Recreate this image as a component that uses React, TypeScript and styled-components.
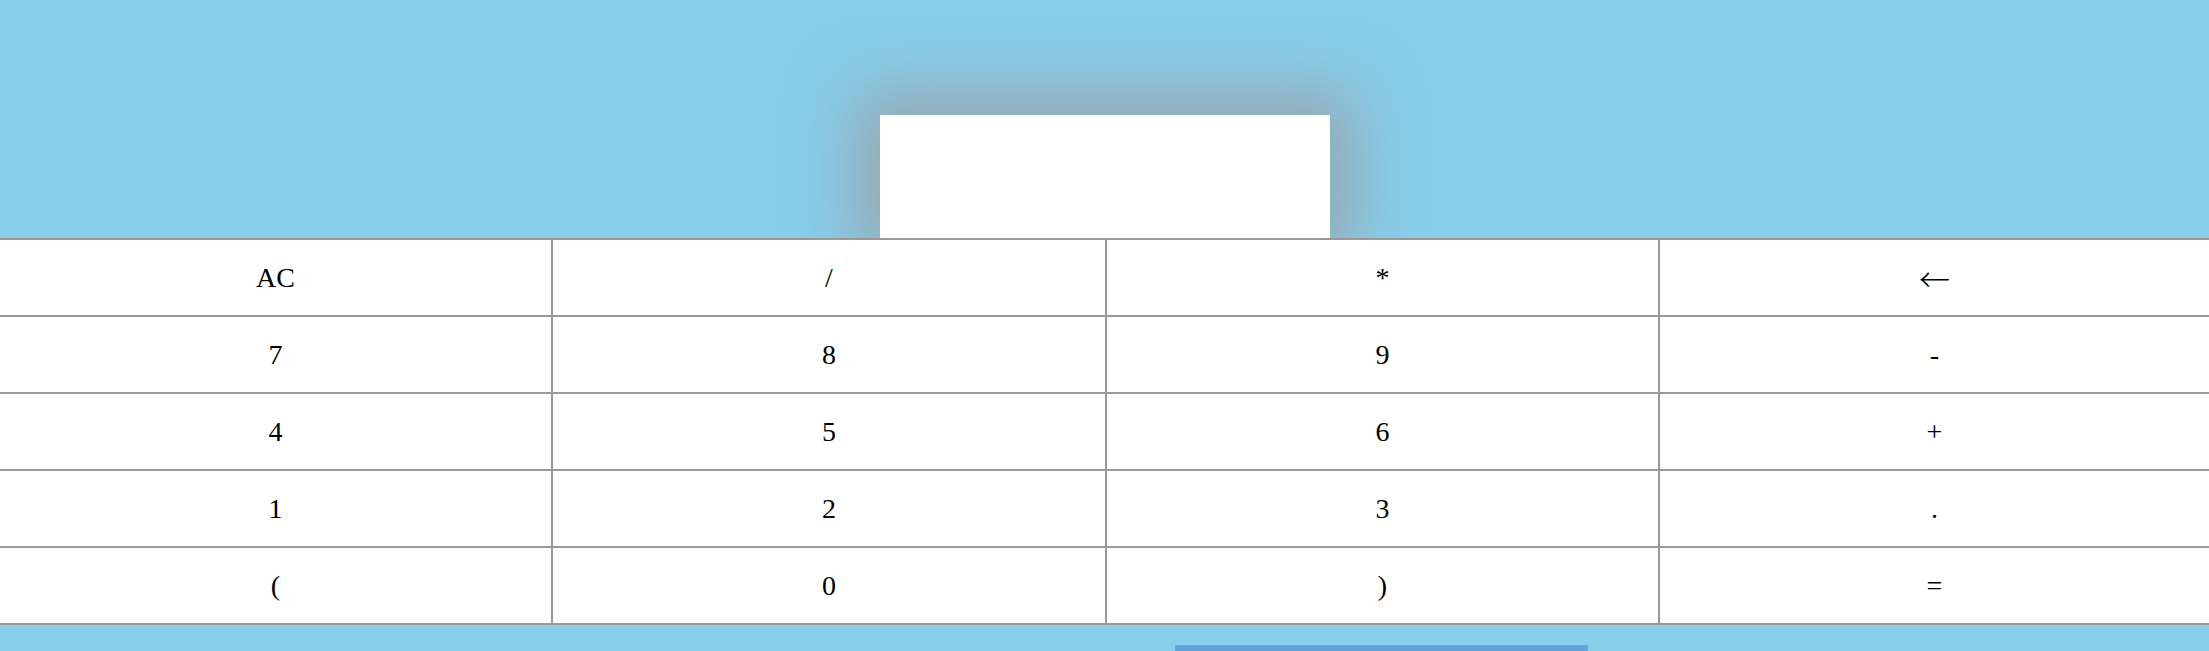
import React from "react";
import styled, { createGlobalStyle } from "styled-components";

const GlobalStyle = createGlobalStyle`
  html, body {
    margin: 0;
    padding: 0;
    background: #87ceeb;
    font-family: "Liberation Serif", "Times New Roman", serif;
    overflow: hidden;
  }
`;

const Page = styled.div`
  display: flex;
  flex-direction: column;
  padding-top: 115px;
`;

const Display = styled.div`
  align-self: center;
  width: 450px;
  height: 123px;
  background: #ffffff;
  box-shadow: 0 0 65px 25px rgba(155, 155, 158, 0.75);
`;

const Keypad = styled.div`
  display: grid;
  grid-template-columns: 551px 552px 551px 1fr;
  grid-auto-rows: 75px;
  gap: 2px;
  background: #999999;
  border-top: 2px solid #999999;
  border-bottom: 2px solid #999999;
`;

const Key = styled.button<{ $arrow?: boolean }>`
  display: flex;
  align-items: center;
  justify-content: center;
  border: none;
  margin: 0;
  padding: 0;
  background: #ffffff;
  color: #000000;
  font-family: ${(p) =>
    p.$arrow
      ? '"Noto Sans CJK JP", "DejaVu Serif", serif'
      : '"Liberation Serif", "Times New Roman", serif'};
  font-size: ${(p) => (p.$arrow ? "31px" : "28px")};
  font-weight: ${(p) => (p.$arrow ? 300 : 400)};
  cursor: pointer;
`;

const Footer = styled.div`
  display: flex;
  padding: 20px 0 0 1175px;
`;

const SubmitBar = styled.div`
  width: 413px;
  height: 6px;
  box-sizing: border-box;
  background: #63a0dc;
  border: 1px solid #6fa9e0;
  border-bottom: none;
`;

const keys = [
  "AC", "/", "*", "\u2190",
  "7", "8", "9", "-",
  "4", "5", "6", "+",
  "1", "2", "3", ".",
  "(", "0", ")", "=",
];

export default function App() {
  return (
    <>
      <GlobalStyle />
      <Page>
        <Display />
        <Keypad>
          {keys.map((k) => (
            <Key key={k} $arrow={k === "\u2190"}>
              {k}
            </Key>
          ))}
        </Keypad>
        <Footer>
          <SubmitBar />
        </Footer>
      </Page>
    </>
  );
}
